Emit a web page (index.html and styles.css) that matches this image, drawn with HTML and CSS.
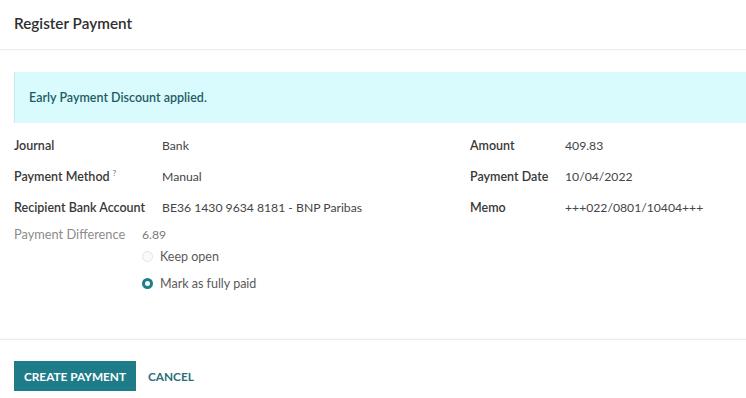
FILE: index.html
```html
<!DOCTYPE html>
<html lang="en">
<head>
    <meta charset="UTF-8">
    <meta name="viewport" content="width=device-width, initial-scale=1.0">
    <title>Register Payment</title>
    <link rel="stylesheet" href="styles.css">
</head>
<body>
    <div class="dialog">
        <header class="dialog-header">
            <h4>Register Payment</h4>
        </header>

        <main class="dialog-body">
            <div class="alert">Early Payment Discount applied.</div>

            <div class="form">
                <div class="group">
                    <div class="field">
                        <span class="label">Journal</span>
                        <span class="value">Bank</span>
                    </div>
                    <div class="field">
                        <span class="label">Payment Method<sup class="help">?</sup></span>
                        <span class="value">Manual</span>
                    </div>
                    <div class="field">
                        <span class="label">Recipient Bank Account</span>
                        <span class="value">BE36 1430 9634 8181 - BNP Paribas</span>
                    </div>
                    <div class="field field-muted">
                        <span class="label">Payment Difference</span>
                        <span class="value">6.89</span>
                    </div>
                    <div class="choices">
                        <label class="radio">
                            <span class="dot"></span>
                            Keep open
                        </label>
                        <label class="radio checked">
                            <span class="dot"></span>
                            Mark as fully paid
                        </label>
                    </div>
                </div>

                <div class="group group-right">
                    <div class="field">
                        <span class="label">Amount</span>
                        <span class="value">409.83</span>
                    </div>
                    <div class="field">
                        <span class="label">Payment Date</span>
                        <span class="value">10/04/2022</span>
                    </div>
                    <div class="field">
                        <span class="label">Memo</span>
                        <span class="value">+++022/0801/10404+++</span>
                    </div>
                </div>
            </div>
        </main>

        <footer class="dialog-footer">
            <button class="btn btn-primary">Create Payment</button>
            <button class="btn btn-link">Cancel</button>
        </footer>
    </div>
</body>
</html>
```

FILE: styles.css
```css
body {
    margin: 0;
    background: #ffffff;
    font-family: 'Lato', 'Noto Sans', sans-serif;
    color: #4a4a4a;
    overflow: hidden;
}

.dialog {
    width: 780px;
    height: 398px;
    display: flex;
    flex-direction: column;
}

.dialog-header {
    height: 49px;
    display: flex;
    align-items: center;
    padding: 0 14px;
    border-bottom: 1px solid #ececec;
    box-shadow: 0 1px 2px rgba(0, 0, 0, 0.03);
}

.dialog-header h4 {
    margin: 0 0 4px;
    font-size: 15.3px;
    font-weight: 600;
    color: #2f2f2f;
}

.dialog-body {
    padding: 22px 0 0 14px;
    height: 267px;
}

.alert {
    height: 51px;
    display: flex;
    align-items: center;
    padding-left: 14px;
    background: #d9fbfd;
    border-left: 1px solid #c6eaee;
    color: #1f5b66;
    font-size: 12.5px;
    font-weight: 600;
}

.form {
    display: flex;
    padding-top: 7px;
}

.group {
    flex: 0 0 456px;
}

.group-right {
    flex: 1;
}

.field {
    height: 31px;
    display: flex;
    align-items: center;
    font-size: 12.5px;
}

.label {
    width: 148px;
    flex: none;
    font-weight: 600;
    color: #383838;
}

.value {
    font-size: 12.2px;
    color: #454545;
}

.group-right .label {
    width: 95px;
}

.help {
    font-size: 8px;
    font-weight: 400;
    color: #4a7a88;
    margin-left: 3px;
}

.field-muted {
    height: 22px;
}

.field-muted .label {
    width: 128px;
    font-size: 12.8px;
    font-weight: 400;
    color: #8c8c8c;
}

.field-muted .value {
    color: #7a7a7a;
}

.choices {
    display: flex;
    flex-direction: column;
    gap: 5px;
    padding-left: 128px;
}

.radio {
    height: 22px;
    display: flex;
    align-items: center;
    gap: 7px;
    font-size: 12.5px;
    color: #5a5a5a;
}

.dot {
    width: 9px;
    height: 9px;
    border: 1px solid #e3e3e3;
    border-radius: 50%;
    background: #fafafa;
}

.radio.checked .dot {
    width: 5px;
    height: 5px;
    border: 3px solid #1e7e8a;
    background: #ffffff;
}

.dialog-footer {
    display: flex;
    align-items: center;
    gap: 12px;
    padding: 14px 14px 0;
    height: 44px;
    border-top: 1px solid #ececec;
    box-shadow: 0 -1px 2px rgba(0, 0, 0, 0.03);
}

.btn {
    font-family: inherit;
    font-size: 11.8px;
    font-weight: 700;
    text-transform: uppercase;
    border: none;
    cursor: pointer;
}

.btn-primary {
    height: 30px;
    width: 122px;
    background: #1e7b88;
    color: #ffffff;
}

.btn-link {
    background: none;
    padding: 0;
    color: #2a6f7a;
}
```
